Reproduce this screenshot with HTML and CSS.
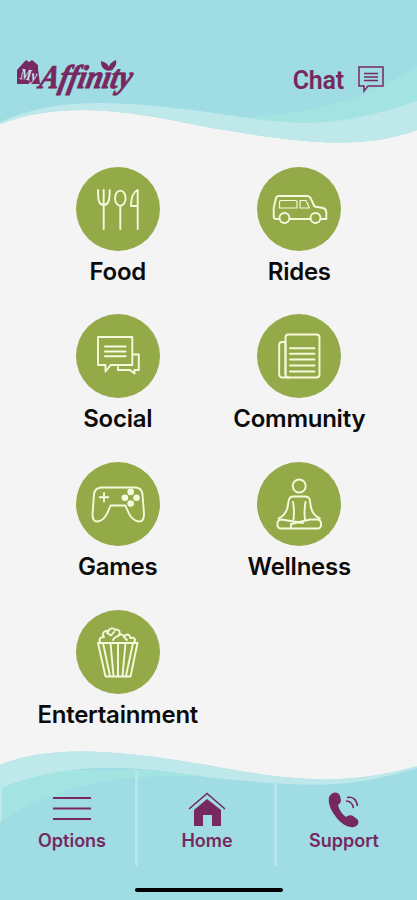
FILE: index.html
```html
<!DOCTYPE html>
<html lang="en">
<head>
    <meta charset="UTF-8">
    <meta name="viewport" content="width=device-width, initial-scale=1.0">
    <title>MyAffinity</title>
    <link rel="stylesheet" href="styles.css">
</head>
<body>
    <div class="app">
        <header class="header">
            <svg class="wave" viewBox="0 0 417 150">
                <path fill="#9fdce3" d="M0 0H417V130C365 149 310 145 207 127C140 114 70 98 0 124Z"/>
                <path fill="#a3e3e2" d="M417 66C370 96 325 114 235 117L300 130L417 115Z"/>
                <path fill="#bfe8eb" d="M0 122C60 96 120 101 207 112C300 126 330 130 417 101V130C365 149 310 145 207 127C140 114 70 98 0 124Z"/>
            </svg>
            <svg class="logo" viewBox="0 0 126 50">
                <path fill="#772860" d="M2 14L11 4L14 6L17 4L23 9V13L25 28H2Z"/>
                <text class="logo-my" x="5" y="24" textLength="17" lengthAdjust="spacingAndGlyphs" transform="rotate(8 12 20)">My</text>
                <text class="logo-name" x="28" y="32" textLength="92" lengthAdjust="spacingAndGlyphs" transform="translate(2 0) skewX(-12)">Affinity</text>
                <path fill="#772860" d="M94 15C86 13 86 9 86 5C92 7 95 9 94 15ZM95 14C93 8 97 6 101 4C102 9 100 12 95 14Z"/>
            </svg>
            <a class="chat">
                <span>Chat</span>
                <svg width="28" height="28" viewBox="0 0 28 28" fill="none" stroke="#772860" stroke-width="1.5">
                    <path d="M2 2H26V21H11L7 26V21H2Z"/>
                    <path d="M7 8.500H21M7 12H21M7 15.500H21"/>
                </svg>
            </a>
        </header>

        <main class="grid">
            <a class="item">
                <svg class="icon" viewBox="0 0 84 84">
                    <path d="M22 23C22 34 23 38 27.700 38S33.700 34 33.700 23M27.700 23V62"/>
                    <ellipse cx="44.300" cy="31.200" rx="5.300" ry="7.600"/>
                    <path d="M44.300 39V62M61.700 62V23C57 25 55 31 55 39H61.700"/>
                </svg>
                <span>Food</span>
            </a>
            <a class="item">
                <svg class="icon" viewBox="0 0 84 84">
                    <path d="M22.500 52H19Q16.700 52 16.700 49V41L19 31Q19.500 29 22 29H50Q52.500 29 53.500 31L57.500 39.500L66 41Q69.300 42 69.300 45V52H63.500M32.500 52H53.500"/>
                    <circle cx="27.500" cy="51" r="5"/>
                    <circle cx="58.500" cy="51" r="5"/>
                    <path class="thin" d="M24 33.500H39Q40 33.500 40 34.500V41H22.500V36Q22.500 33.500 24 33.500ZM43 33.500H49L52.500 41H43Z"/>
                </svg>
                <span>Rides</span>
            </a>
            <a class="item">
                <svg class="icon" viewBox="0 0 84 84">
                    <path d="M22 23H56.300V51H34.700L29.500 57.500V51H22Z"/>
                    <path d="M29 32.500H49.700M29 37.500H49.700M29 42.300H49.700M56.300 40.500H62.800V56H58.500V59.500L54 56H42V53"/>
                </svg>
                <span>Social</span>
            </a>
            <a class="item">
                <svg class="icon" viewBox="0 0 84 84">
                    <rect x="28.500" y="20.500" width="34" height="43" rx="3"/>
                    <path d="M28.500 28H25Q22.200 28 22.200 31V60Q22.200 63.500 25 63.500H32M28.500 28V60M33 34.200H57.500M33 39.800H57.500M33 45.500H57.500M33 51.500H57.500M33 57.500H57.500"/>
                </svg>
                <span>Community</span>
            </a>
            <a class="item">
                <svg class="icon" viewBox="0 0 84 84">
                    <path d="M25 25.500H60Q65.500 26 66.500 32L68 52Q68 59.500 63.500 59.500C55 59 52 50 49.500 43.500H34.500C32 50 29 59 21 59.500Q16.500 59.500 16.500 52L18 32Q19 26 25 25.500Z"/>
                    <path d="M28 31V39.500M23.700 35.200H32.300"/>
                    <g class="solid">
                        <circle cx="54.700" cy="29.900" r="3.300"/>
                        <circle cx="48.900" cy="35.700" r="3.300"/>
                        <circle cx="60.500" cy="35.700" r="3.300"/>
                        <circle cx="54.700" cy="41.500" r="3.300"/>
                    </g>
                </svg>
                <span>Games</span>
            </a>
            <a class="item">
                <svg class="icon" viewBox="0 0 84 84">
                    <circle cx="42.200" cy="24" r="6.500"/>
                    <path d="M36.500 57.500C37.500 51 37 46 36 40M48 57.500C47 51 47.500 46 48.500 40M21.500 56.500C27 54 30 50 31 43C31.500 38 32 34.500 36 34.500H48.500C53 34.500 53 38 53.500 43C54.500 50 57 54 63 56.500"/>
                    <path d="M34 62L53 57.500H60C65.500 58 65.500 66.500 60 66.500H24.500C19 66.500 19 58 24.500 57.500L46 61M34 62V66"/>
                </svg>
                <span>Wellness</span>
            </a>
            <a class="item">
                <svg class="icon" viewBox="0 0 84 84">
                    <path d="M22 33H61.500L54.500 66.500H29.500ZM27 33L34 66M34.500 33L37.500 66M42 33V66M49.500 33L46.500 66M57 33L50 66"/>
                    <path d="M24 32C22 28 26 27 28 27C25 22 30 20 32 22C33 17 39 18 39 20C44 18 45 24 42 26C45 23 48 25 48 27C51 22 55 26 54 28C59 27 60 30 58 32M31 23L35 25.500L38 22M37 30C38 27 40 27 42 26M48 27L51 30"/>
                </svg>
                <span>Entertainment</span>
            </a>
        </main>

        <footer class="footer">
            <svg class="wave" viewBox="0 0 417 150">
                <path fill="#9fdce3" d="M0 15C50 -6 120 0 207 15C300 33 350 35 417 16V150H0Z"/>
                <path fill="#a3e3e2" d="M0 72C60 32 130 23 207 27V20H0Z"/>
                <path fill="#bfe8eb" d="M0 15C50 -6 120 0 207 15C300 33 350 35 417 16V18C350 39 310 38 207 27C130 15 70 11 0 38Z"/>
                <path fill="#bfe8eb" d="M0 15H2V70L0 72Z"/>
            </svg>
            <nav class="tabs">
                <a class="tab">
                    <svg width="40" height="36" viewBox="0 0 40 36" stroke="#772860" stroke-width="2">
                        <path d="M1 6H39M1 16.500H39M1 27H39"/>
                    </svg>
                    <span>Options</span>
                </a>
                <a class="tab">
                    <svg width="40" height="36" viewBox="0 0 40 36" fill="#772860">
                        <path d="M20 7L34 18V34H25V23H16V34H7V18Z"/>
                        <path d="M2 17L20 1.500L38 17" fill="none" stroke="#772860" stroke-width="1.600"/>
                    </svg>
                    <span>Home</span>
                </a>
                <a class="tab">
                    <svg width="34" height="36" viewBox="0 0 34 36" fill="#772860">
                        <path d="M6 1C9 -.5 12 1 13 4L14 8C14 11 12 12 11 13C12 18 16 23 19 25C22 23 24 23 26 24L30 27C33 30 31 34 27 35C22 36 15 33 9 25C3 17 1 11 2 5C3 3 4 2 6 1Z"/>
                        <path d="M19 9Q25 9 26.500 16M20 5.500Q29 4 30.500 14" fill="none" stroke="#772860" stroke-width="1.600"/>
                    </svg>
                    <span>Support</span>
                </a>
            </nav>
            <div class="home-bar"></div>
        </footer>
    </div>
</body>
</html>
```
FILE: styles.css
```css
* {
    box-sizing: border-box;
}

body {
    margin: 0;
    background: #f4f4f4;
    font-family: Inter, "Liberation Sans", sans-serif;
}

.app {
    display: flex;
    flex-direction: column;
    height: 900px;
    overflow: hidden;
}

/* Header */
.header {
    position: relative;
    display: flex;
    justify-content: space-between;
    height: 150px;
    padding: 56px 32px 0 15px;
}

/* background behind the header and footer */
.wave {
    position: absolute;
    top: 0;
    left: 0;
    z-index: -1;
    width: 417px;
    height: 150px;
}

.logo {
    width: 126px;
    height: 50px;
    overflow: visible;
}

.logo-name {
    fill: #772860;
    stroke: #772860;
    stroke-width: 0.9px;
    font: italic bold 33px "Liberation Serif", serif;
}

.logo-my {
    fill: #c9dfea;
    font: italic bold 16px "Liberation Serif", serif;
}

.chat {
    display: flex;
    gap: 13px;
    height: 48px;
    align-items: center;
    color: #772860;
    font: 600 25px Roboto, sans-serif;
    letter-spacing: -0.2px;
}

.chat svg {
    margin-top: -3px;
}

/* Categories */
.grid {
    display: grid;
    grid-template-columns: 181.5px 181.5px;
    grid-auto-rows: 147.8px;
    height: 600px;
    padding: 16.5px 27px 0;
}

.item {
    display: flex;
    flex-direction: column;
    align-items: center;
    color: #0b0b0b;
    font-size: 24px;
    font-weight: 600;
    letter-spacing: -0.25px;
    line-height: 30px;
    white-space: nowrap;
}

.item span {
    margin-top: 6px;
}

.icon {
    width: 84px;
    height: 84px;
    border-radius: 50%;
    background: #94aa49;
    fill: none;
    stroke: #f6f9dc;
    stroke-width: 1.9px;
    stroke-linejoin: round;
    stroke-linecap: round;
}

.thin {
    stroke-width: 1.2px;
}

.solid {
    fill: #f6f9dc;
    stroke: none;
}

/* Footer */
.footer {
    position: relative;
    height: 150px;
    padding-top: 20px;
}

.tabs {
    display: grid;
    grid-template-columns: 138px 139px 140px;
    height: 96px;
}

.tab {
    display: flex;
    flex-direction: column;
    align-items: center;
    padding: 22px 0 0 9px;
    color: #772860;
    font-size: 18px;
    font-weight: 600;
    line-height: 22px;
}

.tab + .tab {
    padding-left: 2px;
}

.tab:last-child {
    padding: 22px 6px 0 0;
}

.tab:not(:last-child) {
    border-right: 3px solid #b5e6eb;
}

.tab:nth-child(2) {
    border-image: linear-gradient(transparent 13px, #b5e6eb 13px) 1;
}

.tab span {
    margin-top: 2px;
}

.home-bar {
    width: 148px;
    height: 4px;
    margin: 22px 0 0 135px;
    border-radius: 2px;
    background: #000;
}
```
